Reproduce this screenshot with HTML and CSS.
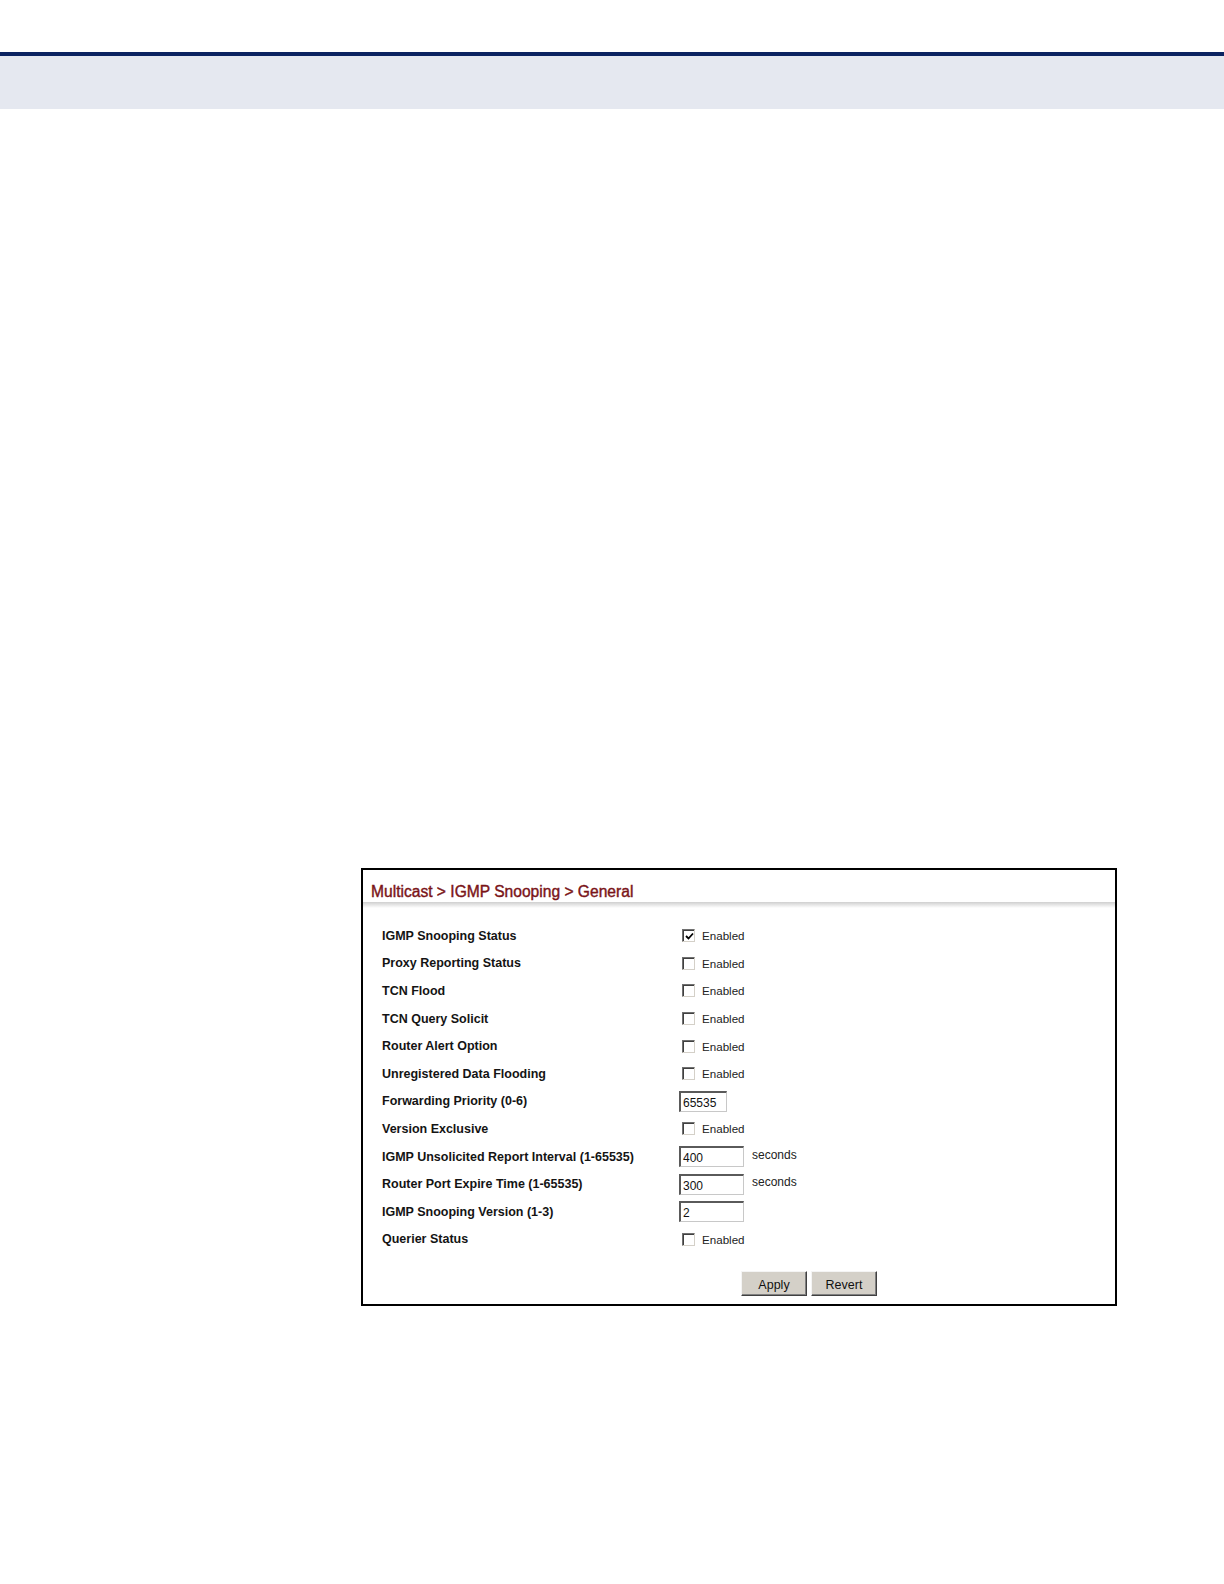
FILE: index.html
```html
<!DOCTYPE html>
<html>
<head>
<meta charset="utf-8">
<link rel="stylesheet" href="styles.css">
</head>
<body>
<header class="page-head">
  <div class="rule"></div>
  <div class="band"></div>
</header>
<main class="content">
  <section class="panel">
    <h1 class="title">Multicast &gt; IGMP Snooping &gt; General</h1>
    <div class="sep"></div>
    <div class="form">
      <div class="row"><span class="label">IGMP Snooping Status</span><span class="ctrl"><span class="cb checked"><svg viewBox="0 0 9 9" width="9" height="9"><path d="M1 4 L3.5 6.5 L8 1.5" fill="none" stroke="#000" stroke-width="1.8"/></svg></span><span class="txt">Enabled</span></span></div>
      <div class="row"><span class="label">Proxy Reporting Status</span><span class="ctrl"><span class="cb"></span><span class="txt">Enabled</span></span></div>
      <div class="row"><span class="label">TCN Flood</span><span class="ctrl"><span class="cb"></span><span class="txt">Enabled</span></span></div>
      <div class="row"><span class="label">TCN Query Solicit</span><span class="ctrl"><span class="cb"></span><span class="txt">Enabled</span></span></div>
      <div class="row"><span class="label">Router Alert Option</span><span class="ctrl"><span class="cb"></span><span class="txt">Enabled</span></span></div>
      <div class="row"><span class="label">Unregistered Data Flooding</span><span class="ctrl"><span class="cb"></span><span class="txt">Enabled</span></span></div>
      <div class="row"><span class="label">Forwarding Priority (0-6)</span><span class="ctrl"><span class="inp short">65535</span></span></div>
      <div class="row"><span class="label">Version Exclusive</span><span class="ctrl"><span class="cb"></span><span class="txt">Enabled</span></span></div>
      <div class="row"><span class="label">IGMP Unsolicited Report Interval (1-65535)</span><span class="ctrl"><span class="inp">400</span><span class="txt unit">seconds</span></span></div>
      <div class="row"><span class="label">Router Port Expire Time (1-65535)</span><span class="ctrl"><span class="inp">300</span><span class="txt unit">seconds</span></span></div>
      <div class="row"><span class="label">IGMP Snooping Version (1-3)</span><span class="ctrl"><span class="inp">2</span></span></div>
      <div class="row"><span class="label">Querier Status</span><span class="ctrl"><span class="cb"></span><span class="txt">Enabled</span></span></div>
    </div>
    <div class="buttons">
      <button class="btn">Apply</button>
      <button class="btn">Revert</button>
    </div>
  </section>
</main>
</body>
</html>
```
FILE: styles.css
```css
html, body {
  margin: 0;
  padding: 0;
  background: #fff;
}
body {
  font-family: "Liberation Sans", Arial, sans-serif;
  color: #111;
}
.page-head {
  padding-top: 52px;
}
.rule {
  height: 4px;
  background: #0b2361;
}
.band {
  height: 53px;
  background: #e5e8f0;
}
.content {
  padding-top: 759px;
  padding-left: 361px;
}
.panel {
  width: 752px;
  border: 2px solid #000;
  padding-bottom: 8px;
  background: #fff;
}
.title {
  margin: 0;
  padding: 12px 0 0 8px;
  font-size: 15.6px;
  line-height: 20px;
  font-weight: normal;
  color: #7a1418;
  -webkit-text-stroke: 0.4px #7a1418;
}
.sep {
  height: 6px;
  background: linear-gradient(to bottom, #cfcfcf, #ececec 60%, #fff);
}
.form {
  padding-top: 14px;
  padding-left: 19px;
}
.row {
  display: flex;
  align-items: center;
  height: 27.6px;
}
.label {
  width: 297px;
  font-size: 12.5px;
  font-weight: bold;
  color: #141414;
}
.ctrl {
  display: flex;
  align-items: center;
}
.cb {
  box-sizing: border-box;
  width: 13px;
  height: 13px;
  margin-left: 3px;
  background: #fff;
  border-top: 1px solid #707070;
  border-left: 1px solid #707070;
  border-right: 1px solid #d4d0c8;
  border-bottom: 1px solid #d4d0c8;
  box-shadow: inset 1px 1px 0 #404040;
  display: flex;
  align-items: center;
  justify-content: center;
}
.cb svg {
  display: block;
  margin: 1px 0 0 1px;
}
.txt {
  margin-left: 7px;
  font-size: 11.6px;
  color: #222;
}
.unit {
  margin-left: 8px;
  font-size: 12px;
  position: relative;
  top: -2px;
}
.inp {
  box-sizing: border-box;
  width: 65px;
  height: 21px;
  padding: 3px 0 0 2px;
  font-size: 12px;
  line-height: 14px;
  color: #111;
  background: #fff;
  border-top: 2px solid #5a5a5a;
  border-left: 2px solid #5a5a5a;
  border-right: 1px solid #c8c8c8;
  border-bottom: 1px solid #c8c8c8;
}
.inp.short {
  width: 48px;
}
.buttons {
  display: flex;
  gap: 4px;
  padding-left: 378px;
  margin-top: 18px;
}
.btn {
  box-sizing: border-box;
  width: 66px;
  height: 25px;
  margin: 0;
  padding: 2px 0 0 0;
  font-family: "Liberation Sans", Arial, sans-serif;
  font-size: 12.5px;
  color: #111;
  background: #d4d0c8;
  border-top: 1px solid #f4f4f4;
  border-left: 1px solid #f4f4f4;
  border-right: 1px solid #404040;
  border-bottom: 1px solid #404040;
  box-shadow: inset -1px -1px 0 #808080;
}
```
